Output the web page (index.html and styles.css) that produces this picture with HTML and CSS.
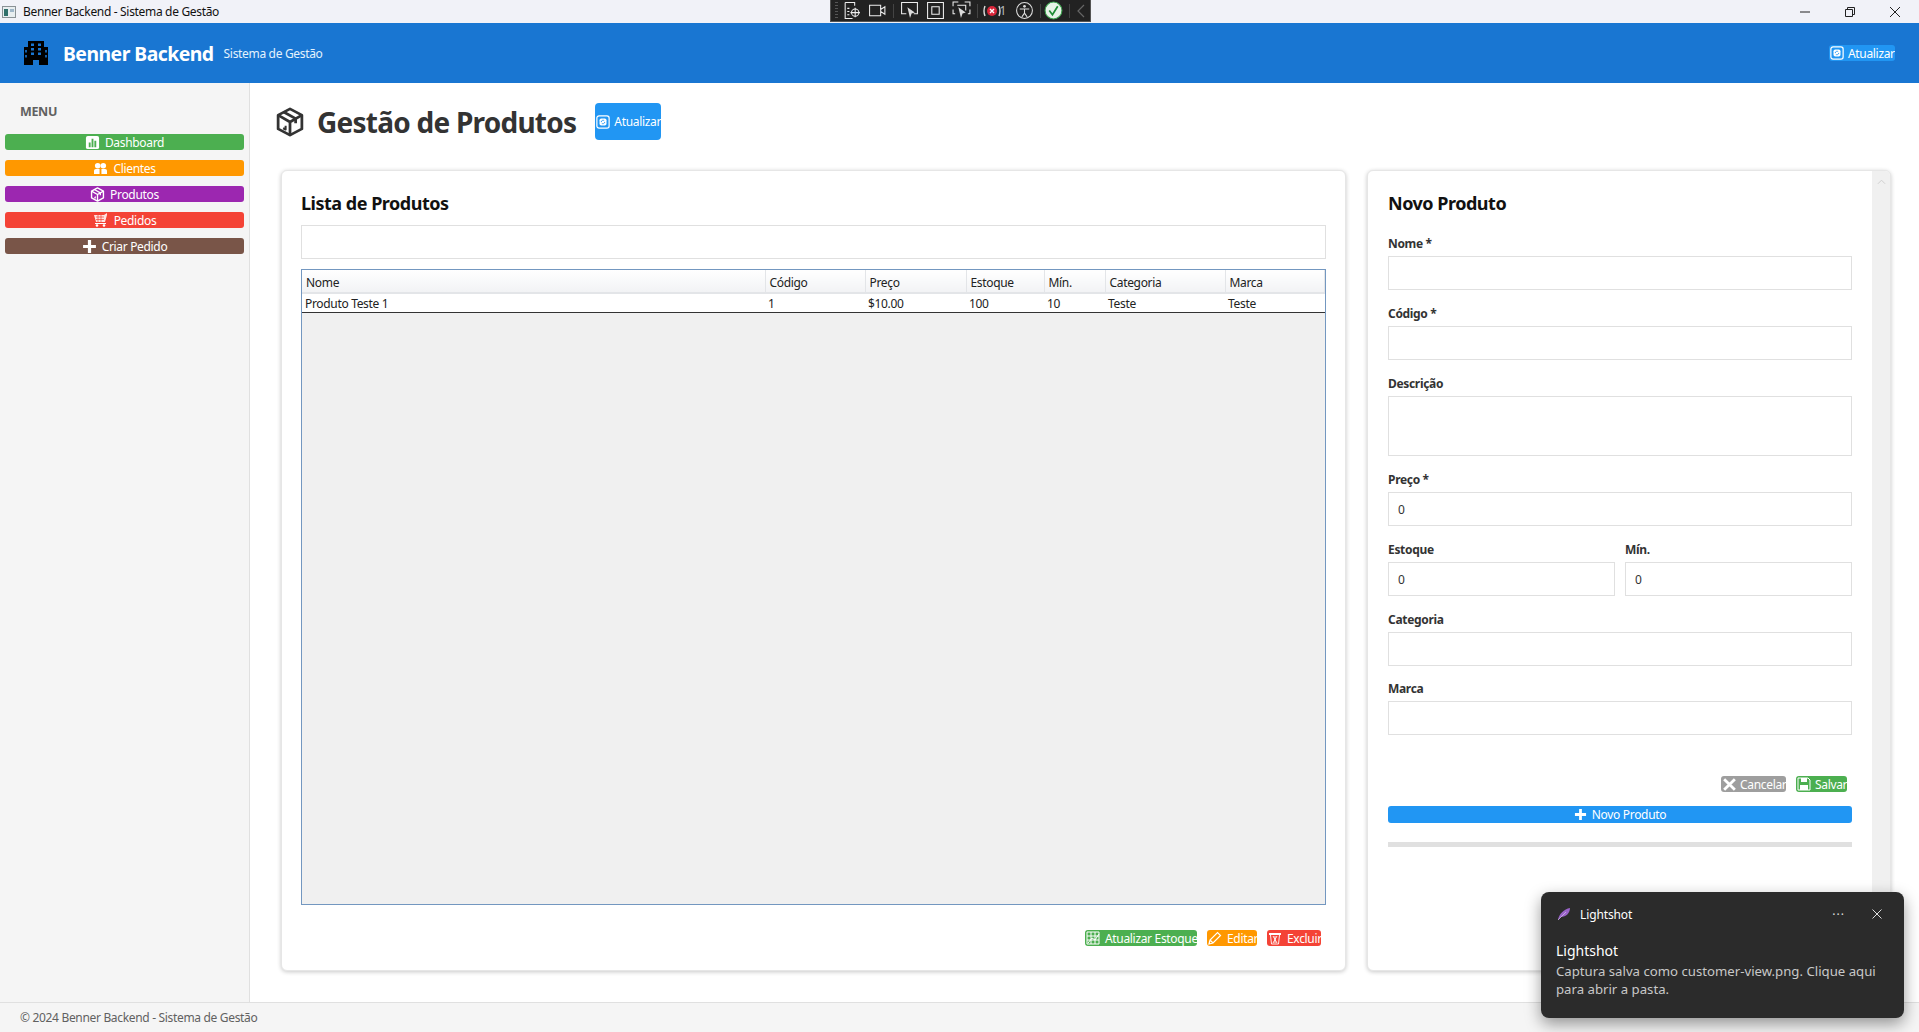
FILE: index.html
```html
<!DOCTYPE html>
<html lang="pt-BR">
<head>
<meta charset="utf-8">
<title>Benner Backend - Sistema de Gestão</title>
<link rel="stylesheet" href="styles.css">
</head>
<body>
<svg class="defs" width="0" height="0">
  <symbol id="i-box" viewBox="0 0 24 24"><g fill="none" stroke="currentColor" stroke-width="2.200" stroke-linejoin="round"><path d="M12 1.500 21.500 6.500V17.500L12 22.500 2.500 17.500V6.500Z"/><path d="M2.500 6.500 12 12 21.500 6.500M12 12V22.500"/><path d="M7 4 16.500 9.300V13"/><path d="M8.500 15v3l-2-1" stroke-width="1.600"/></g></symbol>
  <symbol id="i-refresh" viewBox="0 0 16 16"><rect x="1" y="1" width="14" height="14" rx="2.500" fill="none" stroke="currentColor" stroke-width="1.400"/><rect x="4" y="4" width="8" height="8" rx="2" fill="currentColor"/><path d="M6 8a2 2 0 0 1 3.400-1.400M10 8a2 2 0 0 1-3.400 1.400" fill="none" stroke="#2196f3" stroke-width="1"/></symbol>
  <symbol id="i-plus" viewBox="0 0 14 14"><path d="M7 1v12M1 7h12" stroke="currentColor" stroke-width="3" fill="none"/></symbol>
</svg>
<div class="app">
  <div class="titlebar">
    <svg class="win-icon" viewBox="0 0 14 14" width="14" height="14"><rect x=".5" y="1.500" width="13" height="11" fill="#e8eef0" stroke="#8a9296"/><rect x="2" y="4" width="4" height="7" fill="#2f6f6a"/><rect x="8" y="4" width="4" height="3" fill="#9fb7c9"/></svg>
    <span class="win-title">Benner Backend - Sistema de Gestão</span>
    <div class="win-controls">
      <svg class="win-btn" viewBox="0 0 12 12" width="12" height="12"><path d="M1 6h10" stroke="#222" fill="none"/></svg>
      <svg class="win-btn" viewBox="0 0 12 12" width="12" height="12"><path d="M1.500 3.500h7v7h-7zM3.500 3.500v-2h7v7h-2" stroke="#222" fill="none"/></svg>
      <svg class="win-btn" viewBox="0 0 12 12" width="12" height="12"><path d="M1 1l10 10M11 1 1 11" stroke="#222" fill="none"/></svg>
    </div>
    <div class="debug-bar">
      <span class="grip"></span>
      <svg viewBox="0 0 18 18" width="19" height="19"><path d="M3 1.500h9v3M3 1.500v15h7M5 7h2M5 10h2M5 13h2" stroke="#eee" fill="none"/><circle cx="12.500" cy="11" r="3.500" stroke="#eee" fill="none"/><path d="M12.500 6.500v9M8 11h9" stroke="#eee"/></svg>
      <svg viewBox="0 0 18 18" width="19" height="19"><path d="M1.500 4h10.500v10h-10.500zM12 8l4-2.500v7L12 10" stroke="#eee" fill="none"/></svg>
      <i class="sep"></i>
      <svg viewBox="0 0 18 18" width="19" height="19"><path d="M6 12H1.500V1.500h15V12H13" stroke="#eee" fill="none"/><path d="M7 6l7 5-3 .8L9.500 16z" fill="#ddd"/></svg>
      <svg viewBox="0 0 18 18" width="19" height="19"><path d="M1.500 1.500h15v15h-15zM5.500 5.500h7v7h-7z" stroke="#eee" fill="none"/></svg>
      <svg viewBox="0 0 18 18" width="19" height="19"><path d="M1 5V1h5M12 1h5v4M3 12H1V8M15 12h2V8M5 4h8v5" stroke="#eee" fill="none"/><path d="M6 6l7 5-3 .8L8.500 16z" fill="#ddd"/></svg>
      <i class="sep"></i>
      <svg class="debug-red" viewBox="0 0 20 18" width="20" height="18"><circle cx="10" cy="9" r="5" fill="#d9263a"/><path d="M8 7l4 4M12 7l-4 4" stroke="#fff" stroke-width="1.400"/><path d="M3 4Q1 9 3 14M17 4Q19 9 17 14" stroke="#ddd" fill="none" stroke-width="1.400"/></svg>
      <span class="debug-count">1</span>
      <svg class="debug-access" viewBox="0 0 18 18" width="19" height="19"><circle cx="9" cy="9" r="7.500" stroke="#ddd" fill="none"/><circle cx="9" cy="5" r="1.300" fill="#ddd"/><path d="M4.500 7.500h9M9 8v3.500M9 11.500 6.500 15M9 11.500l2.500 3.500" stroke="#ddd" fill="none"/></svg>
      <i class="sep"></i>
      <svg class="debug-ok" viewBox="0 0 18 18" width="19" height="19"><circle cx="9" cy="9" r="8" fill="#e8f3e8" stroke="#3aa14b"/><path d="M5 9l3 4 5-8" stroke="#1f8c35" stroke-width="1.600" fill="none"/></svg>
      <i class="sep"></i>
      <svg viewBox="0 0 10 18" width="10" height="18"><path d="M8 3 2 9l6 6" stroke="#666" fill="none" stroke-width="1.200"/></svg>
    </div>
  </div>

  <header class="topbar">
    <svg class="brand-icon" viewBox="0 0 24 24" width="24" height="24"><path fill="#000" d="M4 0h16v6h4v18h-9v-5H9v5H0V6h4z"/><g fill="#1976d2"><rect x="7" y="2.500" width="3" height="2.500"/><rect x="14" y="2.500" width="3" height="2.500"/><rect x="7" y="7" width="3" height="2.500"/><rect x="14" y="7" width="3" height="2.500"/><rect x="7" y="11.500" width="3" height="2.500"/><rect x="14" y="11.500" width="3" height="2.500"/><rect x="1.200" y="9" width="1.600" height="2.500"/><rect x="1.200" y="14" width="1.600" height="2.500"/><rect x="21.200" y="9" width="1.600" height="2.500"/><rect x="21.200" y="14" width="1.600" height="2.500"/></g></svg>
    <span class="brand">Benner Backend</span>
    <span class="brand-sub">Sistema de Gestão</span>
    <button class="btn btn-refresh-top"><svg class="ico" width="14" height="14"><use href="#i-refresh"/></svg>Atualizar</button>
  </header>

  <div class="body">
    <aside class="sidebar">
      <div class="menu-title">MENU</div>
      <nav class="menu">
        <a class="btn nav green"><svg viewBox="0 0 16 16" width="15" height="15"><rect x="1" y="1" width="14" height="14" rx="2" fill="#fff"/><path d="M4 13V8h2v5zM7 13V4h2v9zM10 13V6h2v7z" fill="#4caf50"/></svg>Dashboard</a>
        <a class="btn nav orange"><svg viewBox="0 0 16 14" width="15" height="13"><circle cx="5" cy="4" r="3" fill="#fff"/><circle cx="11" cy="4" r="3" fill="#fff"/><path d="M1 13V9.500q0-2 2-2h4v5.500zM9 13V7.500h4q2 0 2 2V13z" fill="#fff"/></svg>Clientes</a>
        <a class="btn nav purple"><svg width="15" height="15"><use href="#i-box"/></svg>Produtos</a>
        <a class="btn nav red"><svg viewBox="0 0 16 14" width="16" height="14"><path d="M1 2h10l3-2v2l-2 7H3z" fill="#fff" opacity=".85"/><path d="M3 4h8M3 6.500h8M5 2v7M8 2v7" stroke="#f44336" fill="none" stroke-width=".7"/><path d="M2 10.500h11" stroke="#fff"/><circle cx="4" cy="12.500" r="1.300" fill="#fff"/><circle cx="11" cy="12.500" r="1.300" fill="#fff"/></svg>Pedidos</a>
        <a class="btn nav brown"><svg width="15" height="15"><use href="#i-plus"/></svg>Criar Pedido</a>
      </nav>
    </aside>

    <main class="main">
      <div class="page-head">
        <svg class="page-icon" width="30" height="30"><use href="#i-box"/></svg>
        <h1 class="page-title">Gestão de Produtos</h1>
        <button class="btn btn-refresh"><svg class="ico" width="14" height="14"><use href="#i-refresh"/></svg>Atualizar</button>
      </div>

      <div class="cards">
        <section class="card list-card">
          <h2 class="card-title">Lista de Produtos</h2>
          <input class="field search" type="text">
          <div class="grid-wrap">
            <table class="grid">
              <colgroup><col class="c-nome"><col class="c-cod"><col class="c-pre"><col class="c-est"><col class="c-min"><col class="c-cat"><col></colgroup>
              <thead><tr><th>Nome</th><th>Código</th><th>Preço</th><th>Estoque</th><th>Mín.</th><th>Categoria</th><th>Marca</th></tr></thead>
              <tbody><tr><td>Produto Teste 1</td><td>1</td><td>$10.00</td><td>100</td><td>10</td><td>Teste</td><td>Teste</td></tr></tbody>
            </table>
          </div>
          <div class="actions">
            <button class="btn act green w-stock"><svg viewBox="0 0 14 14" width="14" height="14"><path d="M1 1h12v12H1zM1 5h12M1 9h12M5 1v12M9 1v12" stroke="#fff" fill="none"/><path d="M2 12l4-5 3 2 4-6" stroke="#fff" fill="none"/></svg>Atualizar Estoque</button>
            <button class="btn act orange w-edit"><svg viewBox="0 0 14 14" width="14" height="14"><path d="M1 13l1-4 7.500-7.500 3 3L5 12zM2 9l3 3" stroke="#fff" fill="none" stroke-width="1.200"/></svg>Editar</button>
            <button class="btn act red w-del"><svg viewBox="0 0 14 14" width="14" height="14"><path d="M1 2h12v2H1z" fill="#fff"/><path d="M2.500 4l1 9h7l1-9M5 5l4 7M9 5l-4 7M7 5v7" stroke="#fff" fill="none" stroke-width=".9"/></svg>Excluir</button>
          </div>
        </section>

        <section class="card form-card">
          <div class="form">
            <h2 class="card-title">Novo Produto</h2>
            <label class="group"><span class="label">Nome *</span><input class="field" type="text"></label>
            <label class="group"><span class="label">Código *</span><input class="field" type="text"></label>
            <label class="group"><span class="label">Descrição</span><textarea class="field area"></textarea></label>
            <label class="group"><span class="label">Preço *</span><input class="field" type="text" value="0"></label>
            <div class="two">
              <label class="group"><span class="label">Estoque</span><input class="field" type="text" value="0"></label>
              <label class="group"><span class="label">Mín.</span><input class="field" type="text" value="0"></label>
            </div>
            <label class="group tight"><span class="label">Categoria</span><input class="field" type="text"></label>
            <label class="group"><span class="label">Marca</span><input class="field" type="text"></label>
            <div class="form-actions">
              <button class="btn act gray w-cancel"><svg viewBox="0 0 14 14" width="15" height="15"><path d="M2 2l10 10M12 2 2 12" stroke="#fff" stroke-width="2.600"/></svg>Cancelar</button>
              <button class="btn act green w-save"><svg viewBox="0 0 14 14" width="14" height="14"><path d="M1 1h10l2 2v10H1z" stroke="#fff" fill="none"/><path d="M4 1h6v4H4zM3 8h8v5H3z" fill="#fff"/></svg>Salvar</button>
            </div>
            <button class="btn new-product"><svg width="13" height="13"><use href="#i-plus"/></svg>Novo Produto</button>
            <div class="progress"></div>
          </div>
          <div class="scrollbar"><svg viewBox="0 0 10 6" width="9" height="6"><path d="M1 5l4-4 4 4" stroke="#ccc" fill="none"/></svg></div>
        </section>
      </div>
    </main>
  </div>

  <footer class="footer">© 2024 Benner Backend - Sistema de Gestão</footer>
</div>

<div class="toast">
  <div class="toast-head">
    <svg viewBox="0 0 14 14" width="14" height="14"><path d="M1 13C2 7 7 2 13 1c0 5-4 9-9 9z" fill="#9a63c9"/><path d="M1 13 9 5" stroke="#d9c2ee" stroke-width=".7"/></svg>
    <span class="toast-app">Lightshot</span>
    <span class="toast-more">···</span>
    <svg viewBox="0 0 10 10" width="10" height="10"><path d="M.5.500l9 9M9.500.500l-9 9" stroke="#ddd" fill="none"/></svg>
  </div>
  <div class="toast-title">Lightshot</div>
  <div class="toast-text">Captura salva como customer-view.png. Clique aqui para abrir a pasta.</div>
</div>
</body>
</html>
```

FILE: styles.css
```css
* { box-sizing: border-box; letter-spacing: -0.027em; }
html, body { margin: 0; height: 100%; overflow: hidden; }
body { font-family: "Noto Sans", "Open Sans", sans-serif; font-size: 12px; color: #333; background: #fff; }
.defs { display: block; height: 0; }
.app { height: 1032px; display: flex; flex-direction: column; }

/* window chrome */
.titlebar { height: 23px; background: #f1f2f8; display: flex; align-items: center; padding-left: 2px; position: relative; flex: none; }
.win-icon { margin-right: 7px; }
.win-title { font-size: 12px; color: #111; }
.win-controls { margin-left: auto; display: flex; gap: 33px; padding-right: 18px; }
.debug-bar { position: absolute; left: 830px; top: 0; width: 261px; height: 22px; background: #222; border: 1px solid #555; border-top: 0; display: flex; align-items: center; gap: 7px; padding-left: 4px; }
.debug-bar .grip { width: 3px; height: 18px; margin-right: -3px; background: repeating-linear-gradient(#555 0 1px, transparent 1px 3px); }
.debug-bar .sep { width: 1px; height: 14px; background: #444; margin: 0 -1px; }
.debug-red { margin-left: -2px; }
.debug-count { color: #bbb; font-size: 12px; margin-left: -9.5px; }
.debug-access { margin-left: 1.5px; }
.debug-ok { margin-left: -3px; }

/* header */
.topbar { height: 60px; background: #1976d2; display: flex; align-items: center; padding: 0 24px; flex: none; color: #fff; }
.brand-icon { margin-right: 15px; flex: none; }
.brand { font-size: 19.4px; font-weight: 700; }
.brand-sub { font-size: 12px; color: #e3f2fd; margin-left: 10px; }

/* buttons */
.btn { border: 0; padding: 0; margin: 0; font: inherit; font-size: 12px; color: #fff; display: flex; align-items: center; justify-content: center; gap: 5px; overflow: hidden; white-space: nowrap; border-radius: 3px; }
.btn svg { flex: none; }
.btn-refresh-top { margin-left: auto; width: 66px; height: 16px; background: #2196f3; justify-content: flex-start; padding-left: 1px; gap: 4px; }
.btn-refresh { width: 66px; height: 37px; background: #2196f3; justify-content: flex-start; padding-left: 1px; gap: 4px; border-radius: 4px; margin-left: 19px; }

/* layout */
.body { flex: 1; display: flex; min-height: 0; }
.sidebar { width: 250px; background: #f5f5f5; border-right: 1px solid #e0e0e0; padding: 20px 5px 0; flex: none; }
.menu-title { font-size: 12.500px; font-weight: 700; color: #616161; padding-left: 15px; line-height: 18px; margin-bottom: 13px; }
.menu { display: flex; flex-direction: column; gap: 10px; }
.nav { height: 16px; width: 239px; }
.green { background: #4caf50; }
.orange { background: #ff9800; }
.purple { background: #9c27b0; }
.red { background: #f44336; }
.brown { background: #795548; }
.gray { background: #9e9e9e; }

.main { flex: 1; min-width: 0; padding: 20px 28px 31px 31px; display: flex; flex-direction: column; }
.page-head { display: flex; align-items: center; height: 37px; margin: 0 0 30px -6px; }
.page-icon { color: #333; flex: none; margin-right: 12px; }
.page-title { font-size: 28px; font-weight: 700; margin: 2px 0 0; color: #333; line-height: 37px; }

.cards { flex: 1; display: flex; gap: 21px; min-height: 0; }
.card { background: #fff; border: 1px solid #e6e6e6; border-radius: 6px; box-shadow: 0 1px 4px rgba(0,0,0,.22); }
.list-card { flex: 1; min-width: 0; display: flex; flex-direction: column; padding: 20px 19px 24px 19px; }
.form-card { width: 524px; flex: none; display: flex; overflow: hidden; }
.card-title { font-size: 18px; font-weight: 700; color: #111; margin: 0 0 10px; line-height: 24px; }

.field { display: block; width: 100%; height: 34px; border: 1px solid #e0e0e0; background: #fff; padding: 0 9px; font: inherit; font-size: 12px; color: #333; outline: 0; border-radius: 0; resize: none; }
.area { height: 60px; }
.search { flex: none; }

.grid-wrap { flex: 1; margin-top: 10px; border: 1px solid #7397c0; background: #f0f0f0; min-height: 0; }
.grid { width: 100%; table-layout: fixed; border-collapse: collapse; background: #fff; font-size: 12px; color: #222; }
.c-nome { width: 463px; }
.c-cod { width: 100px; }
.c-pre { width: 101px; }
.c-est { width: 78px; }
.c-min { width: 61px; }
.c-cat { width: 120px; }
.grid th { height: 23px; font-weight: 400; text-align: left; padding: 2px 4px 0; background: linear-gradient(#fff, #f2f3f5); border-right: 1px solid #e3e5e8; border-bottom: 2px solid #e3e5e8; }
.grid td { height: 19px; padding: 1px 3px 0; border-bottom: 1px solid #333; }

.actions { display: flex; justify-content: flex-end; gap: 10px; margin-top: 25px; padding-right: 5px; }
.act { height: 16px; justify-content: flex-start; padding-left: 1px; }
.w-stock { width: 112px; }
.w-edit { width: 50px; }
.w-del { width: 54px; }
.w-cancel { width: 65px; gap: 3px; }
.w-save { width: 51px; gap: 4px; }

.form { flex: 1; min-width: 0; padding: 20px 20px 0 20px; }
.form .card-title { margin-bottom: 20px; }
.group { display: block; margin-bottom: 15px; flex: 1; min-width: 0; }
.group.tight { margin-bottom: 14px; }
.label { display: block; font-weight: 700; font-size: 12px; line-height: 16px; padding-top: 1px; margin-bottom: 4px; color: #333; }
.two { display: flex; gap: 10px; }
.form-actions { display: flex; justify-content: flex-end; gap: 10px; margin-top: 41px; padding-right: 5px; }
.new-product { width: 464px; height: 17px; background: #2196f3; margin-top: 14px; }
.progress { height: 5px; background: #e0e0e0; margin-top: 19px; }
.scrollbar { width: 18px; background: #f0f0f0; flex: none; padding-top: 4px; }
.scrollbar svg { display: block; margin: 4px auto 0; }

.footer { height: 30px; background: #f5f5f5; border-top: 1px solid #e0e0e0; padding-left: 20px; line-height: 29px; font-size: 12px; color: #616161; flex: none; }

/* notification */
.toast { position: absolute; left: 1541px; top: 892px; width: 363px; height: 126px; background: #2b2b2b; border-radius: 8px; box-shadow: 0 6px 16px rgba(0,0,0,.4); color: #fff; padding: 13px 15px; }
.toast * { letter-spacing: 0; }
.toast-head { display: flex; align-items: center; font-size: 12px; height: 18px; padding-left: 1px; }
.toast-app { margin-left: 9px; letter-spacing: -0.01em; }
.toast-more { margin-left: auto; margin-right: 27px; letter-spacing: 1px; color: #ddd; }
.toast-head svg:last-child { margin-right: 7px; }
.toast-title { font-size: 14px; margin-top: 18px; line-height: 20px; }
.toast-text { font-size: 13.200px; line-height: 18px; color: #c8c8c8; margin-top: 1px; }
```
